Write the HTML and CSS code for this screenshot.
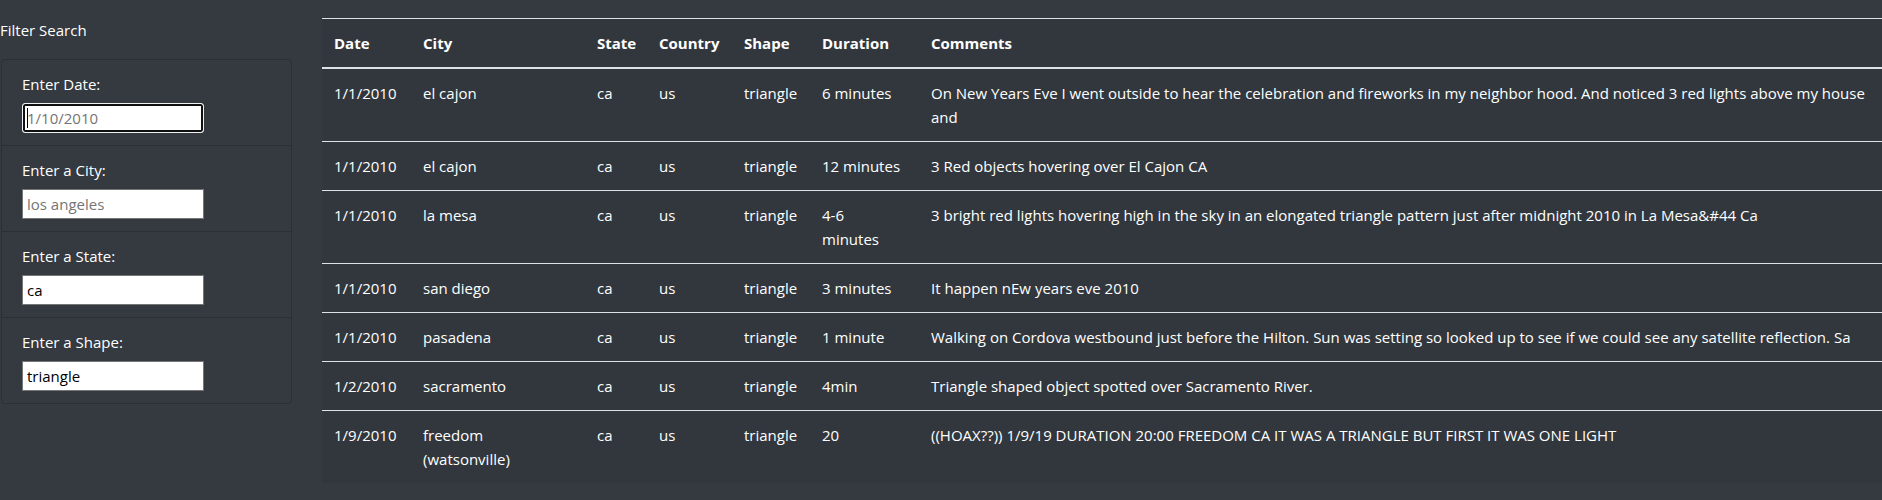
FILE: index.html
```html
<!DOCTYPE html>
<html lang="en">
<head>
<meta charset="utf-8">
<title>UFO Sightings</title>
<link rel="stylesheet" href="styles.css">
</head>
<body>
<div class="page">
  <aside class="sidebar">
    <p class="filter-title">Filter Search</p>
    <ul class="filters">
      <li class="filter-item">
        <label class="filter-label" for="datetime">Enter Date:</label>
        <span class="input-wrap">
          <input class="filter-input focused" id="datetime" type="text" placeholder="1/10/2010">
          <span class="caret"></span>
        </span>
      </li>
      <li class="filter-item">
        <label class="filter-label" for="city">Enter a City:</label>
        <span class="input-wrap"><input class="filter-input" id="city" type="text" placeholder="los angeles"></span>
      </li>
      <li class="filter-item">
        <label class="filter-label" for="state">Enter a State:</label>
        <span class="input-wrap"><input class="filter-input" id="state" type="text" value="ca"></span>
      </li>
      <li class="filter-item">
        <label class="filter-label" for="shape">Enter a Shape:</label>
        <span class="input-wrap"><input class="filter-input" id="shape" type="text" value="triangle"></span>
      </li>
    </ul>
  </aside>
  <main class="main">
    <table class="ufo-table">
      <colgroup>
        <col class="c-date">
        <col class="c-city">
        <col class="c-state">
        <col class="c-country">
        <col class="c-shape">
        <col class="c-dur">
        <col class="c-comm">
      </colgroup>
      <thead>
        <tr>
          <th>Date</th><th>City</th><th>State</th><th>Country</th><th>Shape</th><th>Duration</th><th>Comments</th>
        </tr>
      </thead>
      <tbody>
        <tr>
          <td>1/1/2010</td><td class="city">el cajon</td><td>ca</td><td>us</td><td>triangle</td><td class="dur">6 minutes</td>
          <td>On New Years Eve I went outside to hear the celebration and fireworks in my neighbor hood. And noticed 3 red lights above my house and</td>
        </tr>
        <tr>
          <td>1/1/2010</td><td class="city">el cajon</td><td>ca</td><td>us</td><td>triangle</td><td class="dur">12 minutes</td>
          <td>3 Red objects hovering over El Cajon CA</td>
        </tr>
        <tr>
          <td>1/1/2010</td><td class="city">la mesa</td><td>ca</td><td>us</td><td>triangle</td><td class="dur">4-6 minutes</td>
          <td>3 bright red lights hovering high in the sky in an elongated triangle pattern just after midnight 2010 in La Mesa&amp;#44 Ca</td>
        </tr>
        <tr>
          <td>1/1/2010</td><td class="city">san diego</td><td>ca</td><td>us</td><td>triangle</td><td class="dur">3 minutes</td>
          <td>It happen nEw years eve 2010</td>
        </tr>
        <tr>
          <td>1/1/2010</td><td class="city">pasadena</td><td>ca</td><td>us</td><td>triangle</td><td class="dur">1 minute</td>
          <td>Walking on Cordova westbound just before the Hilton. Sun was setting so looked up to see if we could see any satellite reflection. Sa</td>
        </tr>
        <tr>
          <td>1/2/2010</td><td class="city">sacramento</td><td>ca</td><td>us</td><td>triangle</td><td class="dur">4min</td>
          <td>Triangle shaped object spotted over Sacramento River.</td>
        </tr>
        <tr>
          <td>1/9/2010</td><td class="city">freedom (watsonville)</td><td>ca</td><td>us</td><td>triangle</td><td class="dur">20</td>
          <td>((HOAX??)) 1/9/19 DURATION 20:00 FREEDOM CA IT WAS A TRIANGLE BUT FIRST IT WAS ONE LIGHT</td>
        </tr>
      </tbody>
    </table>
  </main>
</div>
</body>
</html>
```

FILE: styles.css
```css
html, body {
  margin: 0;
  padding: 0;
  overflow: hidden;
}

body {
  background: #343a40;
  color: #ffffff;
  font-family: "Open Sans", "Noto Sans", sans-serif;
  font-size: 15px;
  line-height: 24px;
  height: 500px;
}

.page {
  display: flex;
  align-items: flex-start;
}

.sidebar {
  flex: 0 0 292px;
  width: 292px;
}

.filter-title {
  margin: 18px 0 17px 0;
}

.filters {
  list-style: none;
  margin: 0 0 0 1px;
  padding: 0;
  border: 1px solid #2b3036;
  border-radius: 4px;
}

.filter-item {
  padding: 12px 20px;
  border-top: 1px solid #2b3036;
}

.filter-item:first-child {
  border-top: 0;
}

.filter-label {
  display: block;
  margin-bottom: 7px;
}

.input-wrap {
  position: relative;
  display: block;
  width: 182px;
  height: 30px;
}

.filter-input {
  box-sizing: border-box;
  width: 182px;
  height: 30px;
  margin: 0;
  padding: 1px 4px;
  border: 1px solid #767676;
  border-radius: 0;
  background: #ffffff;
  color: #000000;
  font-family: inherit;
  font-size: 15px;
  outline: none;
}

.filter-input::placeholder {
  color: #757575;
}

.filter-input.focused {
  border: 1px solid #f0f0f0;
  border-radius: 3px;
  box-shadow: inset 0 0 0 2px #101010;
}

.caret {
  position: absolute;
  left: 5px;
  top: 5px;
  width: 1px;
  height: 20px;
  background: #000000;
}

.main {
  flex: 1 1 auto;
  min-width: 0;
  margin-left: 30px;
  overflow: hidden;
}

.ufo-table {
  table-layout: fixed;
  width: 1581px;
  margin-top: 18px;
  border-collapse: collapse;
  background: #32373e;
  color: #ffffff;
}

.c-date { width: 89px; }
.c-city { width: 174px; }
.c-state { width: 62px; }
.c-country { width: 85px; }
.c-shape { width: 78px; }
.c-dur { width: 109px; }
.c-comm { width: 984px; }

.ufo-table th,
.ufo-table td {
  padding: 12px;
  text-align: left;
  vertical-align: top;
  border-top: 1px solid #dee2e6;
}

.ufo-table th {
  font-weight: 700;
}

.ufo-table thead th {
  border-bottom: 2px solid #dee2e6;
}

.ufo-table td.city {
  padding-right: 18px;
}

.ufo-table td.dur {
  padding-right: 17px;
}
```
